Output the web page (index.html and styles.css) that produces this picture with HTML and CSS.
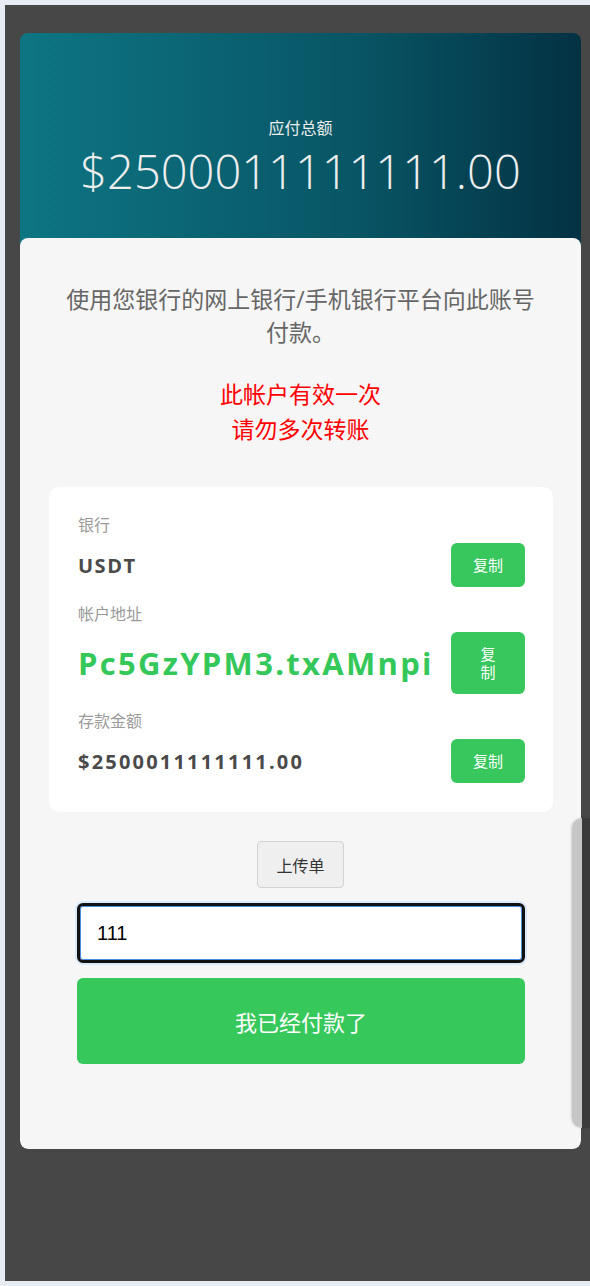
FILE: index.html
```html
<!DOCTYPE html>
<html lang="zh-CN">
<head>
  <meta charset="UTF-8">
  <meta name="viewport" content="width=device-width, initial-scale=1.0">
  <title>付款</title>
  <link rel="stylesheet" href="styles.css">
</head>
<body>

  <div class="page">
    <div class="card">
      <div class="header">
        <p class="header-title">应付总额</p>
        <p class="header-amount">$2500011111111.00</p>
      </div>

      <div class="panel">
        <p class="intro">使用您银行的网上银行/手机银行平台向此账号付款。</p>
        <p class="warning">此帐户有效一次<br>请勿多次转账</p>

        <div class="info">
          <div class="info-item">
            <div class="info-label">银行</div>
            <div class="info-row">
              <span class="info-value">USDT</span>
              <button class="copy-btn" type="button">复制</button>
            </div>
          </div>
          <div class="info-item">
            <div class="info-label">帐户地址</div>
            <div class="info-row">
              <span class="info-value address">Pc5GzYPM3.txAMnpi</span>
              <button class="copy-btn narrow" type="button"><span>复制</span></button>
            </div>
          </div>
          <div class="info-item">
            <div class="info-label">存款金额</div>
            <div class="info-row">
              <span class="info-value amount">$2500011111111.00</span>
              <button class="copy-btn" type="button">复制</button>
            </div>
          </div>
        </div>

        <div class="upload">
          <button class="upload-btn" type="button">上传单</button>
        </div>

        <input class="ref-input" type="text" value="111">
        <button class="pay-btn" type="button">我已经付款了</button>
      </div>
    </div>

    <div class="side-tab"></div>
  </div>

</body>
</html>
```

FILE: styles.css
```css
* {
  margin: 0;
  padding: 0;
  box-sizing: border-box;
}

body {
  background: #e8edf4;
  font-family: "Open Sans", "Noto Sans CJK SC", sans-serif;
}

.page {
  position: relative;
  margin: 5px 0 5px 5px;
  height: 1276px;
  background: #474747;
  padding: 28px 9px 0 15px;
}

.card {
  border-radius: 8px;
  overflow: hidden;
}

/* Bloc du haut avec le montant */
.header {
  height: 215px;
  padding-top: 84px;
  background: linear-gradient(90deg, #0e7583, #085565 60%, #033243);
  text-align: center;
  color: #eeeeee;
}

.header-title {
  font-size: 16px;
  line-height: 22px;
}

.header-amount {
  font-size: 47px;
  font-weight: 300;
  line-height: 60px;
  margin-top: 2px;
}

.panel {
  margin-top: -10px;
  position: relative;
  background: #f6f6f6;
  border-radius: 8px;
  padding: 45px 0 85px;
}

.intro {
  padding: 0 45px;
  font-size: 23px;
  line-height: 33px;
  color: #666;
  text-align: center;
}

.warning {
  margin-top: 28px;
  font-size: 23px;
  line-height: 35px;
  color: #ff0000;
  text-align: center;
}

.info {
  margin: 40px 28px 0 29px;
  background: #fff;
  border-radius: 10px;
  padding: 28px 28px 29px 29px;
}

.info-item + .info-item {
  margin-top: 17px;
}

.info-label {
  font-size: 16px;
  line-height: 20px;
  color: #9a9a9a;
  margin-bottom: 8px;
}

.info-row {
  display: flex;
  align-items: center;
  justify-content: space-between;
  gap: 14px;
}

.info-value {
  font-size: 20px;
  font-weight: bold;
  letter-spacing: 1.5px;
  color: #4a4a4a;
  white-space: nowrap;
}

.info-value.address {
  font-size: 31px;
  letter-spacing: 2.3px;
  color: #34c759;
}

.info-value.amount {
  font-size: 20px;
  letter-spacing: 2.2px;
}

.copy-btn {
  flex-shrink: 0;
  width: 74px;
  padding: 13px 0;
  border: none;
  border-radius: 6px;
  background: #37c75c;
  color: #fff;
  font-family: inherit;
  font-size: 15px;
  line-height: 18px;
}

/* le bouton de l'adresse passe sur deux lignes */
.copy-btn.narrow span {
  display: inline-block;
  width: 1em;
}

.upload {
  margin-top: 29px;
  text-align: center;
}

.upload-btn {
  width: 87px;
  height: 47px;
  background: #efefef;
  border: 1px solid #d3d3d3;
  border-radius: 4px;
  font-family: inherit;
  font-size: 16px;
  color: #333;
}

.ref-input {
  display: block;
  margin: 15px 56px 0 57px;
  width: calc(100% - 113px);
  height: 60px;
  padding: 0 17px;
  border: 3px solid #111;
  border-radius: 6px;
  box-shadow: inset 0 0 0 1px #4a90e2, 0 0 0 2px #dce9fa;
  background: #fff;
  font-family: "Liberation Sans", Arial, sans-serif;
  font-size: 20px;
  color: #000;
  outline: none;
}

.pay-btn {
  display: block;
  margin: 15px 56px 0 57px;
  width: calc(100% - 113px);
  height: 86px;
  border: none;
  border-radius: 6px;
  background: #37c85c;
  color: #fff;
  font-family: inherit;
  font-size: 22px;
}

.side-tab {
  position: absolute;
  top: 813px;
  right: 0;
  width: 18px;
  height: 310px;
  border-radius: 10px 0 0 10px;
  background: linear-gradient(90deg, #c6c6c6 0, #c6c6c6 10px, #3b3b3b 10px);
  box-shadow: -1px 0 2px rgba(0, 0, 0, 0.15);
}
```
